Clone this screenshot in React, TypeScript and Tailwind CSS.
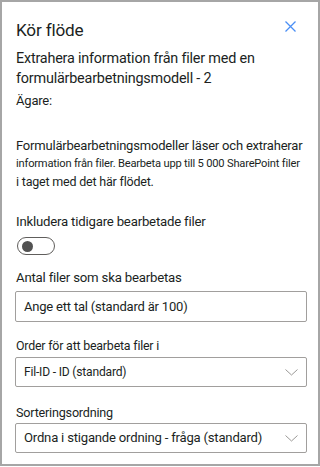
function Chevron() {
  return (
    <svg width="13" height="7" viewBox="0 0 13 7" className="shrink-0">
      <path d="M0.5 0.5 L6.5 6 L12.5 0.5" fill="none" stroke="#9a9896" strokeWidth="1" />
    </svg>
  );
}

function Select({ value, className }: { value: string; className: string }) {
  return (
    <div className="flex h-[30px] items-center justify-between rounded-[2px] border border-[#a19f9d] pl-[8px] pr-[8px]">
      <span className={`whitespace-nowrap text-[#201f1e] ${className}`}>{value}</span>
      <Chevron />
    </div>
  );
}

export default function App() {
  return (
    <div className="h-[467px] w-[320px] bg-white font-[Roboto,sans-serif]">
      <div className="flex h-[466px] flex-col border-2 border-[#a6a6a6] pl-[13px] pr-[11px] pt-[16px] text-[#201f1e]">
        {/* header */}
        <div className="flex h-[24px] items-start justify-between pl-[1px]">
          <h1 className="text-[17.2px] leading-[24px] tracking-[-0.2px]">Kör flöde</h1>
          <svg width="11" height="11" viewBox="0 0 11 11" className="mr-[11px] mt-[3px]">
            <path d="M0.5 0.5 L10.5 10.5 M10.5 0.5 L0.5 10.5" stroke="#4a8ff5" strokeWidth="1.3" />
          </svg>
        </div>

        <p className="mt-[7px] whitespace-nowrap pl-[1px] text-[14.4px] leading-[20px] tracking-[-0.2px]">
          Extrahera information från filer med en
          <br />
          formulärbearbetningsmodell - 2
        </p>
        <p className="mt-[3px] pl-[1px] text-[13px] leading-[18px] tracking-[-0.2px]">Ägare:</p>

        <p className="mt-[27px] pl-[1px] leading-[18px] tracking-[-0.2px]">
          <span className="block whitespace-nowrap text-[13px]">
            Formulärbearbetningsmodeller läser och extraherar
          </span>
          <span className="block whitespace-nowrap text-[11.15px]">
            information från filer. Bearbeta upp till 5 000 SharePoint filer
          </span>
          <span className="block whitespace-nowrap text-[12.5px]">i taget med det här flödet.</span>
        </p>

        <p className="mt-[22px] pl-[1px] text-[13.2px] leading-[18px] tracking-[-0.2px]">
          Inkludera tidigare bearbetade filer
        </p>
        <div className="ml-[2px] mt-[6px] flex h-[18px] w-[38px] items-center rounded-full border border-[#605e5c] pl-[4px]">
          <div className="h-[11px] w-[11px] rounded-full bg-[#525252]" />
        </div>

        <p className="mt-[14px] pl-[1px] text-[13.2px] leading-[18px] tracking-[-0.2px]">
          Antal filer som ska bearbetas
        </p>
        <div className="mt-[4px] flex h-[31px] items-center rounded-[2px] border border-[#a19f9d] pl-[8px]">
          <span className="text-[13px] tracking-[-0.2px]">Ange ett tal (standard är 100)</span>
        </div>

        <p className="mt-[15px] pl-[1px] text-[12.4px] leading-[18px] tracking-[-0.2px]">
          Order för att bearbeta filer i
        </p>
        <div className="mt-[2px]">
          <Select value="Fil-ID - ID (standard)" className="text-[12.1px] tracking-[-0.2px]" />
        </div>

        <p className="mt-[17px] pl-[1px] text-[12.6px] leading-[18px] tracking-[-0.2px]">Sorteringsordning</p>
        <div className="mt-[1px]">
          <Select value="Ordna i stigande ordning - fråga (standard)" className="text-[13.1px] tracking-[-0.2px]" />
        </div>
      </div>
    </div>
  );
}
